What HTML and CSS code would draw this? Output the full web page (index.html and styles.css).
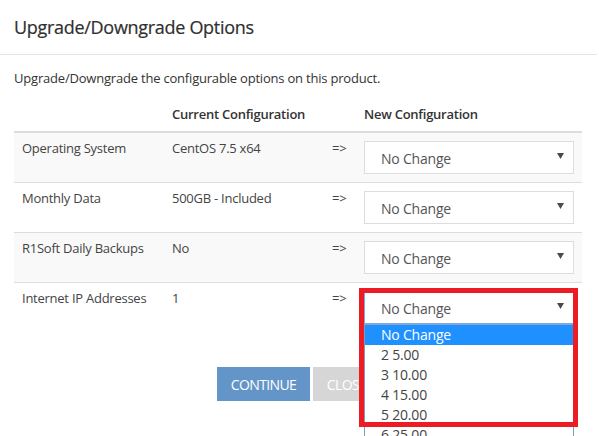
FILE: index.html
```html
<!DOCTYPE html>
<html>
<head>
<meta charset="utf-8">
<link rel="stylesheet" href="styles.css">
</head>
<body>
<div class="modal">
  <div class="modal-header">
    <h4 class="modal-title">Upgrade/Downgrade Options</h4>
  </div>
  <div class="modal-body">
    <p class="intro">Upgrade/Downgrade the configurable options on this product.</p>
    <table class="config">
      <thead>
        <tr>
          <th class="c1"></th>
          <th class="c2">Current Configuration</th>
          <th class="c3"></th>
          <th class="c4">New Configuration</th>
        </tr>
      </thead>
      <tbody>
        <tr class="odd">
          <td>Operating System</td>
          <td>CentOS 7.5 x64</td>
          <td>=&gt;</td>
          <td><div class="select"><span>No Change</span><svg class="arrow" width="7" height="6" viewBox="0 0 7 6"><path d="M0 0H7L3.5 6Z" fill="#4a4a4a"/></svg></div></td>
        </tr>
        <tr>
          <td>Monthly Data</td>
          <td>500GB - Included</td>
          <td>=&gt;</td>
          <td><div class="select"><span>No Change</span><svg class="arrow" width="7" height="6" viewBox="0 0 7 6"><path d="M0 0H7L3.5 6Z" fill="#4a4a4a"/></svg></div></td>
        </tr>
        <tr class="odd">
          <td>R1Soft Daily Backups</td>
          <td>No</td>
          <td>=&gt;</td>
          <td><div class="select"><span>No Change</span><svg class="arrow" width="7" height="6" viewBox="0 0 7 6"><path d="M0 0H7L3.5 6Z" fill="#4a4a4a"/></svg></div></td>
        </tr>
        <tr>
          <td>Internet IP Addresses</td>
          <td>1</td>
          <td>=&gt;</td>
          <td class="open-cell">
            <div class="select focus"><span>No Change</span><svg class="arrow" width="7" height="6" viewBox="0 0 7 6"><path d="M0 0H7L3.5 6Z" fill="#4a4a4a"/></svg></div>
            <ul class="dropdown">
              <li class="selected">No Change</li>
              <li>2 5.00</li>
              <li>3 10.00</li>
              <li>4 15.00</li>
              <li>5 20.00</li>
              <li>6 25.00</li>
            </ul>
            <div class="highlight"></div>
          </td>
        </tr>
      </tbody>
    </table>
    <div class="actions">
      <button class="btn btn-primary">Continue</button>
      <button class="btn btn-default">Close</button>
    </div>
  </div>
</div>
</body>
</html>
```
FILE: styles.css
```css
html, body {
  margin: 0;
  padding: 0;
  background: #fff;
}
body {
  width: 599px;
  height: 436px;
  overflow: hidden;
  font-family: "Open Sans", "Liberation Sans", sans-serif;
  color: #333;
}
.modal {
  width: 597px;
  height: 436px;
  background: #fff;
}
.modal-header {
  padding: 15px 14px 14px;
  border-bottom: 1px solid #e5e5e5;
}
.modal-title {
  margin: 0;
  font-size: 18px;
  font-weight: 500;
  line-height: 25px;
  color: #2f2f2f;
  letter-spacing: -0.3px;
  -webkit-text-stroke: 0.2px #2f2f2f;
}
.modal-body {
  padding: 14px 15px 0 14px;
}
.intro {
  margin: 0 0 8px;
  font-size: 13px;
  line-height: 19px;
  color: #333;
  letter-spacing: -0.2px;
}
.config {
  width: 568px;
  border-collapse: collapse;
  font-size: 13px;
  color: #444;
  letter-spacing: -0.25px;
}
.config th {
  text-align: left;
  font-weight: 600;
  color: #333;
  padding: 8px 8px 7px;
  line-height: 20px;
  border-bottom: 2px solid #ddd;
}
.c1 { width: 134px; }
.c2 { width: 144px; }
.c3 { width: 16px; }
.c4 { width: 210px; }
.config td {
  padding: 5px 8px 8px;
  line-height: 20px;
  vertical-align: top;
  border-top: 1px solid #ddd;
}
.config tbody tr:first-child td {
  border-top: none;
}
.config tr.odd td {
  background: #f9f9f9;
}
.select {
  box-sizing: border-box;
  height: 33px;
  width: 210px;
  margin-top: 3px;
  border: 1px solid #ddd;
  background: #fff;
  display: flex;
  align-items: center;
  justify-content: space-between;
  padding: 0 8px 0 16px;
  font-size: 14px;
  color: #555;
  letter-spacing: -0.2px;
}
.select span {
  margin-top: 3px;
}
.arrow {
  margin-top: -3px;
  margin-right: 1px;
}
.select.focus {
  border-color: #7fa8d8;
}
.open-cell {
  position: relative;
}
.dropdown {
  position: absolute;
  left: 8px;
  top: 41px;
  width: 210px;
  box-sizing: border-box;
  margin: 0;
  padding: 0;
  list-style: none;
  background: #fff;
  border: 1px solid #7f9db9;
  border-top-color: #7fa8d8;
  font-size: 14px;
  line-height: 20px;
  color: #444;
  letter-spacing: -0.2px;
  z-index: 2;
}
.dropdown li {
  padding-left: 16px;
  height: 20px;
}
.dropdown li.selected {
  background: #1e90ff;
  color: #fff;
}
.highlight {
  position: absolute;
  left: 3px;
  top: 5px;
  width: 219px;
  height: 139px;
  box-sizing: border-box;
  border: 5px solid #ed1c24;
  z-index: 3;
}
.actions {
  display: flex;
  justify-content: center;
  gap: 3px;
  margin-top: 35px;
  padding-left: 1px;
}
.btn {
  height: 34px;
  border: none;
  padding: 0;
  font-family: "Open Sans", "Liberation Sans", sans-serif;
  font-size: 14px;
  text-transform: uppercase;
  color: #fff;
  letter-spacing: -0.6px;
}
.btn-primary {
  background: #6395c8;
  width: 93px;
}
.btn-default {
  background: #d6d6d6;
  width: 67px;
}
```
